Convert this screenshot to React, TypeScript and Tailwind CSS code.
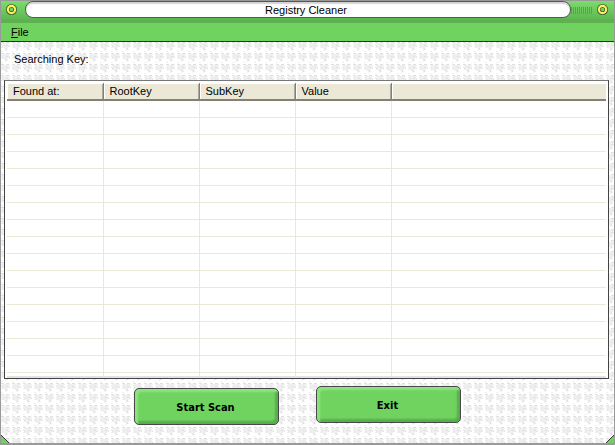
const columns = ["Found at:", "RootKey", "SubKey", "Value"];
const rows = Array.from({ length: 16 }, (_, i) => i);

function Texture() {
  return (
    <svg className="absolute inset-0 h-full w-full" aria-hidden="true" shapeRendering="crispEdges">
      <defs>
        <pattern id="crumple" width="11" height="11" patternUnits="userSpaceOnUse">
          <rect width="11" height="11" fill="#ffffff" />
          <path fill="#efefef" d="M1 1h8v1h-1v1h1v2h-2v1h-1v1h1v1h-2v1h-1v-2h-1v-1h-3v-1h1v-1h-1zM0 9h2v1h-2z" />
          <path fill="#e0e0e0" d="M0 0h3v1h-3zM5 0h3v1h-3zM5 3h2v1h-2zM1 4h1v1h-1zM5 6h1v2h-1zM8 4h1v1h-1z" />
        </pattern>
      </defs>
      <rect width="100%" height="100%" fill="url(#crumple)" />
    </svg>
  );
}

function Knob({ label }: { label: string }) {
  return (
    <button aria-label={label} className="mx-[2px] block h-4 w-4">
      <svg viewBox="0 0 16 16" className="h-4 w-4">
        <circle cx="8.5" cy="8.5" r="5.6" fill="#3f5c35" />
        <circle cx="8.5" cy="8.5" r="4.7" fill="#fff25c" />
        <circle cx="8.5" cy="8.5" r="2.6" fill="#5a5f35" />
        <circle cx="8.5" cy="8.5" r="1.8" fill="#70d35f" />
      </svg>
    </button>
  );
}

function Grip() {
  return (
    <svg className="mt-[6px] h-[7px] w-[21px]" aria-hidden="true" shapeRendering="crispEdges">
      <defs>
        <pattern id="grip" width="2" height="7" patternUnits="userSpaceOnUse">
          <rect width="1" height="7" fill="#54a648" />
        </pattern>
      </defs>
      <rect width="21" height="7" fill="url(#grip)" />
    </svg>
  );
}

function GreenButton({ children }: { children: string }) {
  return (
    <button className="h-[37px] w-[145px] rounded-[5px] border border-[#484848] bg-[#70d35f] pt-[3px] pr-[2px] font-['DejaVu_Sans_Condensed',sans-serif] text-[11px] font-bold shadow-[inset_3px_3px_2px_#8ce47e,inset_-3px_-3px_2px_#58ad4b]">
      {children}
    </button>
  );
}

export default function App() {
  return (
    <div className="flex min-h-screen flex-col border-x border-b-2 border-[#999] bg-[#70d35f] font-['Liberation_Sans',sans-serif] text-[11px] text-black">
      <header className="flex h-[23px] items-start border-t border-b-4 border-t-[#999] border-b-[#5eb050] bg-linear-to-b from-[#7cdc6c] to-[#5fb852]">
        <Knob label="Window menu" />
        <h1 className="ml-1 h-[17px] flex-1 rounded-lg border border-[#555] bg-white pl-4 text-center leading-4 shadow-[inset_0_2px_1px_#d4d4d4]">
          Registry Cleaner
        </h1>
        <div className="flex w-[43px] justify-end pr-[2px]">
          <Grip />
          <Knob label="Close" />
        </div>
      </header>
      <nav className="flex h-[19px] items-center border-b border-[#303030] px-[10px]">
        <button>
          <u>F</u>ile
        </button>
      </nav>
      <main className="relative flex flex-1 flex-col overflow-hidden">
        <Texture />
        <p className="relative h-[38px] px-[13px] pt-[9px] leading-4">Searching Key:</p>
        <div className="relative mr-[5px] ml-[3px] border border-[#444] border-t-[#777] bg-white pt-[2px] pr-[2px] pl-[2px]">
          <table className="w-full table-fixed border-collapse">
            <thead>
              <tr className="h-[17px] bg-[#ebe8d8]">
                {columns.map((name) => (
                  <th
                    key={name}
                    className="w-24 border-r border-b-2 border-[#848072] px-[6px] text-left leading-4 font-normal shadow-[inset_1px_1px_0_#fff,inset_-1px_0_0_#aca899]"
                  >
                    {name}
                  </th>
                ))}
                <td className="border-b-2 border-[#848072] shadow-[inset_1px_1px_0_#fff]" />
              </tr>
            </thead>
            <tbody>
              {rows.map((row) => (
                <tr key={row} className="h-[17px] border-b border-[#ebe8d8]">
                  {columns.map((name) => (
                    <td key={name} className="border-r border-[#ebe8d8]" />
                  ))}
                  <td />
                </tr>
              ))}
              <tr className="h-1">
                {columns.map((name) => (
                  <td key={name} className="border-r border-[#ebe8d8]" />
                ))}
                <td />
              </tr>
            </tbody>
          </table>
          <div className="h-[2px] bg-[#e2e2e2]" />
        </div>
        <div className="relative flex items-start justify-center gap-[37px] pt-[7px] pr-5">
          <div className="pt-[2px]">
            <GreenButton>Start Scan</GreenButton>
          </div>
          <GreenButton>Exit</GreenButton>
        </div>
        <svg className="absolute bottom-0 left-0 h-2 w-2" viewBox="0 0 8 8" aria-hidden="true">
          <path d="M0 0L8 8H0z" fill="#70d35f" />
          <path d="M0 0L8 8" stroke="#333" />
        </svg>
        <svg className="absolute right-0 bottom-0 h-2 w-2" viewBox="0 0 8 8" aria-hidden="true">
          <path d="M8 0L0 8H8z" fill="#70d35f" />
          <path d="M8 0L0 8" stroke="#333" />
        </svg>
      </main>
    </div>
  );
}
